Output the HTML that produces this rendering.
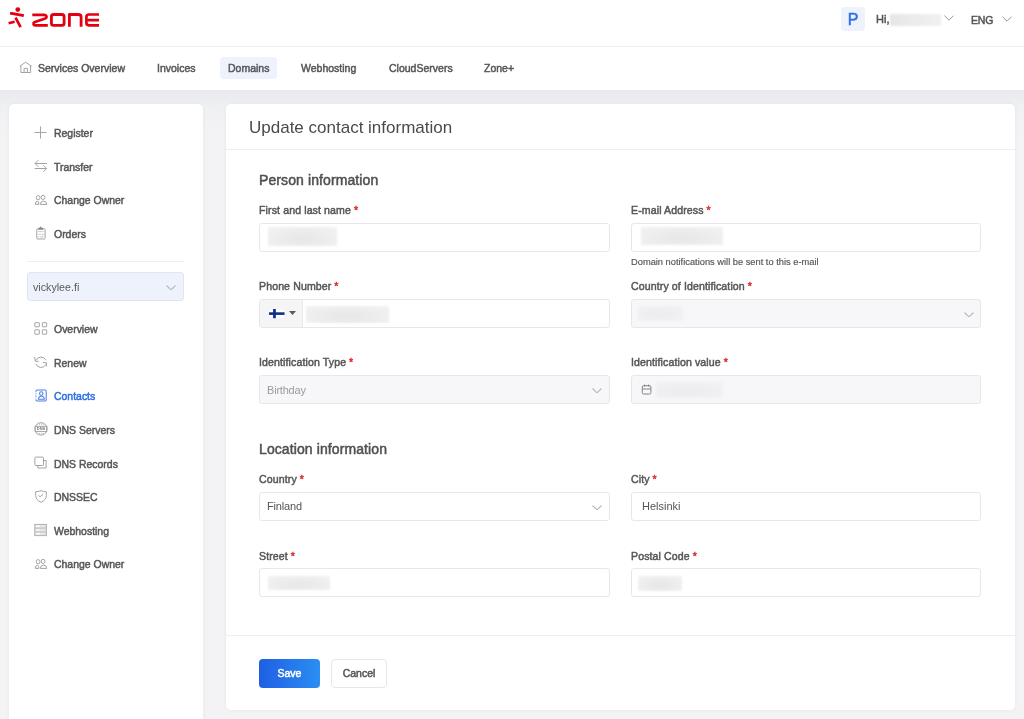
<!DOCTYPE html>
<html><head><meta charset="utf-8">
<style>
*{box-sizing:border-box;margin:0;padding:0}
html,body{width:1024px;height:719px;overflow:hidden}
body{font-family:"Liberation Sans",sans-serif;-webkit-font-smoothing:antialiased;background:#f3f3f5;color:#555;position:relative}
.abs{position:absolute}
.med{-webkit-text-stroke:0.5px currentColor}
#hdr{will-change:transform;left:0;top:0;width:1024px;height:47px;background:#fff;border-bottom:1px solid #eef0f4}
#nav{will-change:transform;left:0;top:47px;width:1024px;height:43px;background:#fff}
#shadow{left:0;top:90px;width:1024px;height:40px;background:linear-gradient(#e7e9ec,#eff0f2 40%,#f3f3f5)}
.navi{position:absolute;top:0;font-size:11px;line-height:14px;color:#575757;white-space:nowrap;transform:scaleX(0.955);transform-origin:0 0}
#side{will-change:transform;left:9px;top:104px;width:194px;height:640px;background:#fff;border-radius:5px;box-shadow:0 0 4px rgba(20,20,60,0.05)}
#card{will-change:transform;left:226px;top:104px;width:789px;height:606px;background:#fff;border-radius:5px;box-shadow:0 0 4px rgba(20,20,60,0.05)}
.si{position:absolute;left:45px;font-size:11px;line-height:14px;color:#575757;white-space:nowrap;transform:scaleX(0.95);transform-origin:0 0}
.ic{position:absolute;left:25px;width:14px;height:14px}
.lbl{position:absolute;font-size:11px;line-height:14px;color:#575757;white-space:nowrap;letter-spacing:0.12px;transform:scaleX(0.96);transform-origin:0 0}
.lbl b{color:#e03030;font-weight:400;margin-left:3px}
.inp{position:absolute;height:29px;border:1px solid #e6e7ed;border-radius:3px;background:#fff}
.dis{background:#f7f7fa}
.blur{position:absolute;background:radial-gradient(ellipse at 50% 62%,#e7e7e8 0%,#ececed 45%,#f3f3f3 100%);filter:blur(0.8px)}
.dblur{background:radial-gradient(ellipse at 45% 55%,#ececee 0%,#efeff1 50%,#f3f3f5 100%)}
.chev{position:absolute;width:10px;height:5.5px}
</style></head>
<body>
<div id="hdr" class="abs">
  <svg class="abs" style="left:0;top:0" width="110" height="40" viewBox="0 0 110 40">
    <circle cx="17.8" cy="9.6" r="2.4" fill="#e3000f"/>
    <g stroke="#e3000f" fill="none" stroke-linecap="butt">
      <line x1="10.1" y1="13.1" x2="23.8" y2="15.6" stroke-width="2.9"/>
      <line x1="15.5" y1="17.6" x2="20.6" y2="27.1" stroke-width="2.7"/>
      <line x1="8.6" y1="23.2" x2="14.6" y2="21.7" stroke-width="2.7"/>
    </g>
    <g fill="none" stroke="#e3000f" stroke-linejoin="round">
      <path d="M32.3 14.9 H44.3 C46.8 14.9 47.3 17.6 45.2 18.4 L35 22 C32.8 22.8 33.2 25.3 35.4 25.3 H47.8" stroke-width="2.7"/>
      <rect x="51.4" y="14.5" width="12.7" height="10.9" rx="2.2" stroke-width="2.8"/>
      <path d="M69.4 26.8 V14.5 H78.3 Q81.1 14.5 81.1 17.2 V26.8" stroke-width="2.8"/>
      <path d="M99 14.5 H88.9 Q86.4 14.5 86.4 17 V22.8 Q86.4 25.3 88.9 25.3 H99 M87.8 20.1 H99" stroke-width="2.7"/>
    </g>
  </svg>
  <div class="abs" style="left:841px;top:7px;width:24px;height:24px;background:#edf2fd;border-radius:4px;color:#2f6fe4;font-size:16px;line-height:26px;text-align:center" ><span class="med">P</span></div>
  <div class="abs med" style="left:876px;top:12px;font-size:11px;line-height:14px;color:#555">Hi,</div>
  <div class="abs" style="left:890px;top:13.5px;width:50.5px;height:12px;background:linear-gradient(90deg,#e6e6e6,#ececec 50%,#f0f0f0);filter:blur(1px)"></div>
  <svg class="abs" style="left:944px;top:15px" width="10" height="6" viewBox="0 0 10 6"><path d="M0.4 0.6 L5 5.2 L9.6 0.6" fill="none" stroke="#999" stroke-width="1"/></svg>
  <div class="abs med" style="left:971px;top:12.5px;font-size:10.5px;line-height:14px;color:#555;letter-spacing:-0.2px">ENG</div>
  <svg class="abs" style="left:1002px;top:16px" width="10" height="6" viewBox="0 0 10 6"><path d="M0.4 0.6 L5 5.2 L9.6 0.6" fill="none" stroke="#999" stroke-width="1"/></svg>
</div>

<div id="nav" class="abs">
  <svg class="abs" style="left:16px;top:11px" width="20" height="20" viewBox="0 0 20 20"><path d="M3.9 8.3 L9.5 4.2 L15.6 8.2 M4.9 7.5 V14.5 H14.6 V7.5 M8.1 14.5 V10.3 H11.4 V14.5" fill="none" stroke="#a3a3a3" stroke-width="1" stroke-linejoin="round"/></svg>
  <div class="navi med" style="left:38px;top:14px">Services Overview</div>
  <div class="navi med" style="left:157px;top:14px">Invoices</div>
  <div class="abs" style="left:220px;top:10px;width:57px;height:22px;background:#eef2fd;border-radius:4px"></div>
  <div class="navi med" style="left:228px;top:14px">Domains</div>
  <div class="navi med" style="left:301px;top:14px">Webhosting</div>
  <div class="navi med" style="left:389px;top:14px">CloudServers</div>
  <div class="navi med" style="left:484px;top:14px">Zone+</div>
</div>
<div id="shadow" class="abs"></div>

<div id="side" class="abs">
  <div class="si med" style="top:22px">Register</div>
  <div class="si med" style="top:55.5px">Transfer</div>
  <div class="si med" style="top:89px">Change Owner</div>
  <div class="si med" style="top:123px">Orders</div>
  <div class="abs" style="left:18px;top:157px;width:157px;height:1px;background:#eceef2"></div>
  <div class="abs" style="left:18px;top:168px;width:157px;height:29px;background:#edf2fd;border:1px solid #dfe5f3;border-radius:3px"></div>
  <div class="abs" style="left:24px;top:176px;font-size:10.7px;line-height:14px;color:#5a5a5a">vickylee.fi</div>
  <svg class="chev" style="left:157px;top:180.5px" viewBox="0 0 10 5.5"><path d="M0.5 0.5 L5 4.9 L9.5 0.5" fill="none" stroke="#b8b8b8" stroke-width="1.1"/></svg>
  <div class="si med" style="top:218px">Overview</div>
  <div class="si med" style="top:252px">Renew</div>
  <div class="si med" style="top:285px;color:#2f6fe4">Contacts</div>
  <div class="si med" style="top:319px">DNS Servers</div>
  <div class="si med" style="top:353px">DNS Records</div>
  <div class="si med" style="top:386px">DNSSEC</div>
  <div class="si med" style="top:420px">Webhosting</div>
  <div class="si med" style="top:453px">Change Owner</div>
</div>


<svg class="abs" style="left:0;top:0;will-change:transform" width="1024" height="719" viewBox="0 0 1024 719">
 <g fill="none" stroke="#a3a3a3" stroke-width="1">
  <path d="M40.5 126.5 V138.5 M34.5 132.5 H46.5"/>
  <path d="M47 163.5 H35 M38.3 160.2 L35 163.5 L38.3 166.8 M34.6 168.5 H46.6 M43.3 165.2 L46.6 168.5 L43.3 171.8"/>
  <g>
   <ellipse cx="38.1" cy="197.7" rx="1.9" ry="2.1"/><ellipse cx="43.1" cy="197.4" rx="1.9" ry="2.1"/>
   <path d="M35.3 204.4 Q35.3 201.2 37.6 201.1 Q38.9 201.6 38.9 204.4 Z M40.4 204.4 Q40.4 201.1 43.6 201.1 Q46.7 201.1 46.7 204.4 Z"/>
  </g>
  <g transform="translate(0 364)">
   <ellipse cx="38.1" cy="197.7" rx="1.9" ry="2.1"/><ellipse cx="43.1" cy="197.4" rx="1.9" ry="2.1"/>
   <path d="M35.3 204.4 Q35.3 201.2 37.6 201.1 Q38.9 201.6 38.9 204.4 Z M40.4 204.4 Q40.4 201.1 43.6 201.1 Q46.7 201.1 46.7 204.4 Z"/>
  </g>
  <rect x="36.8" y="228.8" width="8.3" height="10.2" rx="0.6"/>
  <path d="M38.3 229.8 H43.1 V228.6 Q43.1 227.7 42.2 227.7 H41.7 Q41.2 226.4 40.6 226.4 Q40 226.4 39.5 227.7 H39.2 Q38.3 227.7 38.3 228.6 Z" fill="#8a8a8a" stroke="none"/>
  <path d="M38.2 231.6 H43.8 M38.2 234.3 H43.8" stroke="#cfcfcf"/>
  <path d="M38.2 236.9 H39.4 M40.2 236.6 L41.2 237.5 L43.6 235.8" stroke="#bbb"/>
  <rect x="34.8" y="322.7" width="4.5" height="4.1" rx="0.4"/><rect x="42.3" y="322.7" width="4.4" height="4.1" rx="0.4"/>
  <rect x="34.8" y="329.8" width="4.5" height="4.4" rx="0.4"/><rect x="42.3" y="329.8" width="4.4" height="4.4" rx="0.4"/>
  <path d="M35.9 360.6 A5.5 5.5 0 0 1 46 360.2 M34.6 357.2 L35.4 361.3 L38.6 361.4 M35.8 363.7 A5.5 5.5 0 0 0 46 364.3 M42.9 362.6 L46.4 362.8 L46.6 366.4"/>
  <circle cx="41" cy="428.9" r="6.2"/>
  <rect x="35.3" y="426.3" width="11.4" height="5.3" fill="#fff" stroke="#9a9a9a" stroke-width="0.9"/>
  <path d="M37 424.2 H45 M37 433.6 H45" stroke="#b5b5b5" stroke-dasharray="1 1"/>
  <rect x="34.9" y="457.1" width="8.6" height="8.4" rx="0.8"/>
  <path d="M37.8 466 V468 H46.1 V460.6 H44"/>
  <path d="M41 490.7 Q38.2 491.6 35.7 491.8 V495.6 Q35.8 500 41 502.3 Q46.2 500 46.3 495.6 V491.8 Q43.8 491.6 41 490.7 Z"/>
  <path d="M38.4 495.2 L40.1 496.8 L43.2 494"/>
  <rect x="34.8" y="524.4" width="11.6" height="11.2" fill="#e4e4e4" stroke="#b0b0b0"/>
  <path d="M34.8 528.1 H46.4 M34.8 531.9 H46.4" stroke="#c4c4c4" stroke-width="1.3"/>
 </g>
 <path d="M36 526.2 H40 M36 530 H40 M36 533.8 H40" stroke="#fff" stroke-width="1.2"/>
 <path d="M41.5 526.2 H45.5 M41.5 530 H45.5 M41.5 533.8 H45.5" stroke="#eee" stroke-width="1" stroke-dasharray="1 1"/>
 <text x="41" y="430.4" font-size="4" font-weight="700" text-anchor="middle" fill="#777" font-family="Liberation Sans">DNS</text>
 <g fill="none" stroke="#4d7fe6" stroke-width="1.05">
  <path d="M35.9 391.4 Q36 390 37.3 390 H45 Q46.2 390 46.2 391.2 V399.8 Q46.2 401 45 401 H37.3 Q36 401 35.9 399.7" />
  <path d="M35.9 391.3 V399.8" stroke-dasharray="0.9 0.7" stroke-opacity="0.75"/>
  <circle cx="41.3" cy="393.4" r="1.75"/>
  <path d="M38.4 399.3 Q38.4 396.2 41.3 396.2 Q44.3 396.2 44.3 399.3 Z"/>
 </g>
</svg>

<div id="card" class="abs">
  <div class="abs" style="left:23px;top:14px;font-size:17px;line-height:20px;color:#4a4a4a">Update contact information</div>
  <div class="abs" style="left:0;top:45px;width:789px;height:1px;background:#eceef2"></div>
  <div class="abs med" style="left:33px;top:67px;font-size:14px;line-height:18px;color:#505050;letter-spacing:0.1px">Person information</div>
  <div class="lbl med" style="left:33px;top:99px">First and last name<b>*</b></div>
  <div class="inp" style="left:33px;top:119px;width:351px"></div>
  <div class="blur" style="left:41.6px;top:123px;width:69px;height:19px"></div>
  <div class="lbl med" style="left:405px;top:99px">E-mail Address<b>*</b></div>
  <div class="inp" style="left:405px;top:119px;width:350px"></div>
  <div class="blur" style="left:415.3px;top:123px;width:81.6px;height:18px"></div>
  <div class="abs" style="left:405px;top:152px;font-size:9.3px;line-height:12px;color:#555;-webkit-text-stroke:0.15px #555">Domain notifications will be sent to this e-mail</div>

  <div class="lbl med" style="left:33px;top:175px">Phone Number<b>*</b></div>
  <div class="inp" style="left:33px;top:195px;width:351px"></div>
  <div class="abs" style="left:34px;top:196px;width:43px;height:27px;background:#f5f5f6;border-right:1px solid #e6e7ee;border-radius:2px 0 0 2px"></div>
  <svg class="abs" style="left:43px;top:204.8px" width="16" height="10" viewBox="0 0 16 10"><rect x="0.25" y="0.25" width="15.2" height="8.8" rx="0.8" fill="#fff" stroke="#ececec" stroke-width="0.5"/><rect x="4.1" y="0" width="2.7" height="9.2" fill="#0e2f86"/><rect x="0" y="3.3" width="15.5" height="2.6" fill="#0e2f86"/></svg>
  <svg class="abs" style="left:63px;top:207px" width="7" height="5" viewBox="0 0 7 5"><path d="M0 0 H7 L3.5 4 Z" fill="#5a5a5a"/></svg>
  <div class="blur" style="left:80.3px;top:201.8px;width:82.7px;height:17px"></div>
  <div class="lbl med" style="left:405px;top:175px">Country of Identification<b>*</b></div>
  <div class="inp dis" style="left:405px;top:195px;width:350px"></div>
  <div class="blur dblur" style="left:411.5px;top:201.5px;width:45.7px;height:15px"></div>
  <svg class="chev" style="left:738px;top:207.5px" viewBox="0 0 10 5.5"><path d="M0.5 0.5 L5 4.9 L9.5 0.5" fill="none" stroke="#b8b8b8" stroke-width="1.1"/></svg>

  <div class="lbl med" style="left:33px;top:251px">Identification Type<b>*</b></div>
  <div class="inp dis" style="left:33px;top:271px;width:351px"></div>
  <div class="abs" style="left:41px;top:279px;font-size:11px;line-height:14px;color:#9a9a9a;letter-spacing:-0.2px">Birthday</div>
  <svg class="chev" style="left:366px;top:283.5px" viewBox="0 0 10 5.5"><path d="M0.5 0.5 L5 4.9 L9.5 0.5" fill="none" stroke="#b8b8b8" stroke-width="1.1"/></svg>
  <div class="lbl med" style="left:405px;top:251px">Identification value<b>*</b></div>
  <div class="inp dis" style="left:405px;top:271px;width:350px"></div>
  <svg class="abs" style="left:414.5px;top:280px" width="11" height="11" viewBox="0 0 11 11"><rect x="1.3" y="1.7" width="8.6" height="8.3" rx="1.3" fill="none" stroke="#777" stroke-width="0.9"/><path d="M1.3 5 H9.9 M3.6 0.6 V2.6 M7.6 0.6 V2.6" fill="none" stroke="#777" stroke-width="0.9"/></svg>
  <div class="blur dblur" style="left:430.3px;top:277.5px;width:67px;height:16px"></div>

  <div class="abs med" style="left:33px;top:336.2px;font-size:14px;line-height:18px;color:#505050;letter-spacing:0.1px">Location information</div>
  <div class="lbl med" style="left:33px;top:368px">Country<b>*</b></div>
  <div class="inp" style="left:33px;top:388px;width:351px"></div>
  <div class="abs" style="left:41px;top:395px;font-size:11px;line-height:14px;color:#555;letter-spacing:-0.15px">Finland</div>
  <svg class="chev" style="left:366px;top:400.5px" viewBox="0 0 10 5.5"><path d="M0.5 0.5 L5 4.9 L9.5 0.5" fill="none" stroke="#b8b8b8" stroke-width="1.1"/></svg>
  <div class="lbl med" style="left:405px;top:368px">City<b>*</b></div>
  <div class="inp" style="left:405px;top:388px;width:350px"></div>
  <div class="abs" style="left:416px;top:395px;font-size:11px;line-height:14px;color:#555">Helsinki</div>

  <div class="lbl med" style="left:33px;top:444.5px">Street<b>*</b></div>
  <div class="inp" style="left:33px;top:464px;width:351px"></div>
  <div class="blur" style="left:42px;top:471.6px;width:61.6px;height:14px"></div>
  <div class="lbl med" style="left:405px;top:444.5px">Postal Code<b>*</b></div>
  <div class="inp" style="left:405px;top:464px;width:350px"></div>
  <div class="blur" style="left:411.5px;top:472px;width:44.5px;height:15.4px"></div>

  <div class="abs" style="left:0;top:531px;width:789px;height:1px;background:#eceef2"></div>
  <div class="abs med" style="left:33px;top:555px;width:61px;height:29px;border-radius:4px;background:linear-gradient(90deg,#1f5fe3,#2b8ef2);color:#fff;font-size:10.5px;line-height:29px;text-align:center">Save</div>
  <div class="abs med" style="left:105px;top:555px;width:56px;height:29px;border-radius:4px;border:1px solid #e6e7ed;background:#fff;color:#555;font-size:10.5px;line-height:27px;text-align:center">Cancel</div>
</div>
</body></html>
